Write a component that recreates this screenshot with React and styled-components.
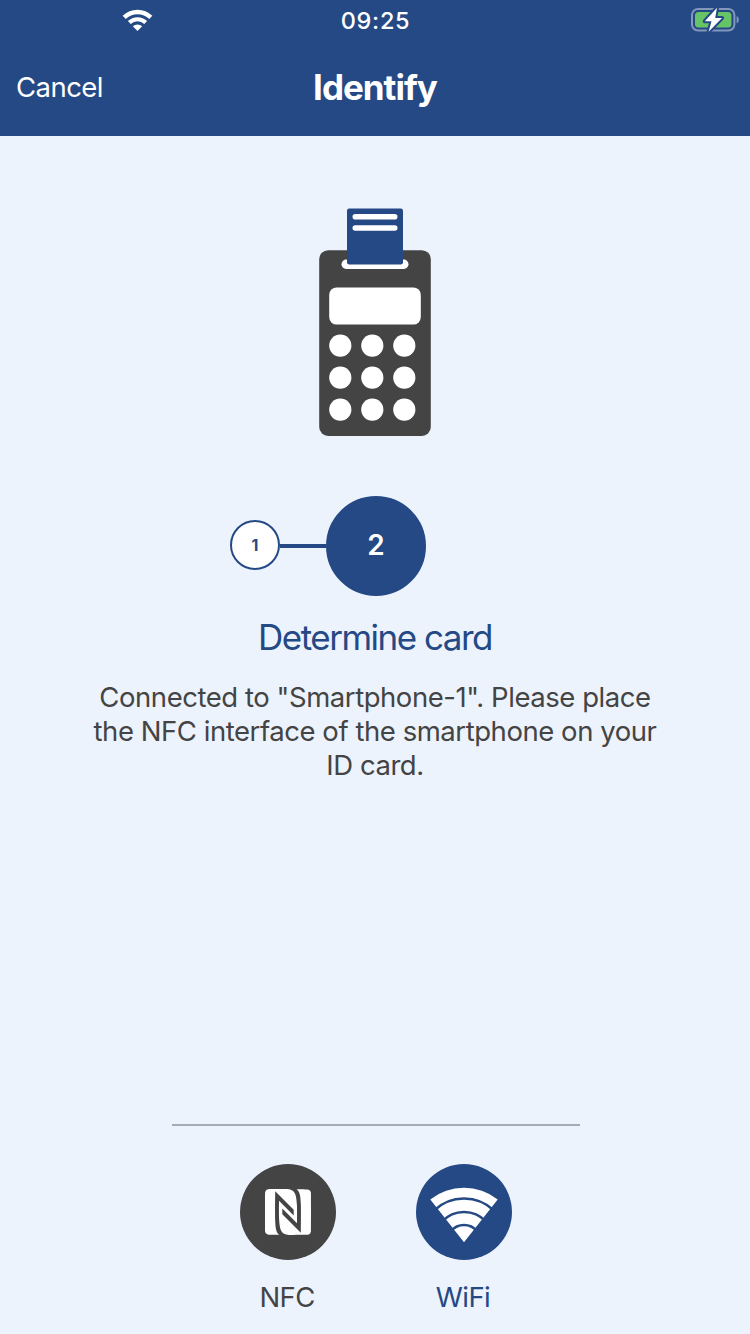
import React from 'react';
import styled, { createGlobalStyle } from 'styled-components';
import { SiNfc } from 'react-icons/si';

const BLUE = '#254985';
const DARK = '#444444';
const PAGE = '#ecf3fd';

const GlobalStyle = createGlobalStyle`
  *, *::before, *::after { box-sizing: border-box; }
  body { margin: 0; background: ${PAGE}; }
`;

const Screen = styled.div`
  display: flex;
  flex-direction: column;
  width: 750px;
  height: 1334px;
  overflow: hidden;
  background: ${PAGE};
  color: ${DARK};
  font-family: Inter, 'Liberation Sans', sans-serif;
`;

const StatusBar = styled.div`
  display: grid;
  grid-template-columns: 1fr auto 1fr;
  align-items: center;
  height: 40px;
  background: ${BLUE};
  color: #fff;
`;

const Signal = styled.div`
  padding-left: 122px;
  line-height: 0;
`;

const Clock = styled.time`
  padding: 2px 0 0 1px;
  font-size: 23.5px;
  font-weight: 500;
  line-height: 38px;
  letter-spacing: 0.7px;
`;

const BatterySlot = styled.div`
  justify-self: end;
  padding-right: 10px;
  line-height: 0;
`;

const NavBar = styled.header`
  display: grid;
  grid-template-columns: 1fr auto 1fr;
  align-items: center;
  height: 96px;
  padding: 0 16px 2px;
  background: ${BLUE};
  color: #fff;
`;

const NavButton = styled.button`
  justify-self: start;
  padding: 0;
  border: 0;
  background: none;
  color: inherit;
  font: 400 27.5px/40px Inter, sans-serif;
  letter-spacing: -0.55px;
`;

const NavTitle = styled.h1`
  margin: 0;
  font-size: 35px;
  font-weight: 700;
  line-height: 44px;
  letter-spacing: -1px;
`;

const Content = styled.main`
  display: flex;
  flex: 1;
  flex-direction: column;
  align-items: center;
  padding-top: 72px;
`;

const Steps = styled.div`
  display: flex;
  align-items: center;
  align-self: flex-start;
  height: 100px;
  margin: 60px 0 0 230px;
`;

const Step = styled.div`
  display: flex;
  align-items: center;
  justify-content: center;
  width: ${(p) => (p.$active ? 100 : 50)}px;
  height: ${(p) => (p.$active ? 100 : 50)}px;
  padding-bottom: ${(p) => (p.$active ? 2 : 0)}px;
  margin-top: ${(p) => (p.$active ? 0 : -2)}px;
  border: 2px solid ${BLUE};
  border-radius: 50%;
  background: ${(p) => (p.$active ? BLUE : '#fff')};
  color: ${(p) => (p.$active ? '#fff' : BLUE)};
  font-size: ${(p) => (p.$active ? 28 : 16)}px;
  font-weight: ${(p) => (p.$active ? 600 : 700)};
`;

const StepLine = styled.div`
  width: 46px;
  height: 4px;
  background: ${BLUE};
`;

const Heading = styled.h2`
  margin: 19px 0 0;
  color: ${BLUE};
  font-size: 35px;
  font-weight: 400;
  line-height: 44px;
  letter-spacing: -1.5px;
`;

const Message = styled.p`
  width: 590px;
  margin: 21px 0 0;
  font-size: 27.5px;
  line-height: 34px;
  letter-spacing: -0.45px;
  text-align: center;
`;

const Footer = styled.footer`
  display: flex;
  flex-direction: column;
  align-items: center;
  height: 210px;
`;

const Divider = styled.hr`
  width: 408px;
  height: 2px;
  margin: 0 0 38px 2px;
  border: 0;
  background: #a5abb9;
`;

const Methods = styled.div`
  display: flex;
  gap: 80px;
  margin-left: 2px;
`;

const Method = styled.div`
  display: flex;
  flex-direction: column;
  align-items: center;
  width: 96px;
  color: ${(p) => p.$color};
`;

const MethodBadge = styled.div`
  display: flex;
  align-items: center;
  justify-content: center;
  width: 96px;
  height: 96px;
  border-radius: 50%;
  background: currentColor;
`;

const MethodLabel = styled.span`
  margin: 17px 2px 0 0;
  font-size: 27.5px;
  line-height: 40px;
  letter-spacing: -0.6px;
`;

const SignalIcon = () => (
  <svg width="31" height="24" viewBox="0 0 31 24" fill="none" stroke="#fff">
    <path d="M2.2 9.4A19 19 0 0 1 28.8 9.4" strokeWidth="4.4" />
    <path d="M7.3 14.5A12 12 0 0 1 23.7 14.5" strokeWidth="4.2" />
    <path d="M15.5 23L10.8 18.2A7 7 0 0 1 20.2 18.2Z" fill="#fff" stroke="none" />
  </svg>
);

const BatteryIcon = () => (
  <svg width="50" height="26" viewBox="0 0 50 26">
    <rect x="2" y="2" width="42.4" height="21.5" rx="6" fill="none" stroke="#8297bb" strokeWidth="2" />
    <path d="M46.6 9v7.5c3-1.6 3-5.9 0-7.5z" fill="#8297bb" />
    <rect x="5" y="5" width="36.4" height="15.5" rx="3.5" fill="#66c466" />
    <path d="M27 0.8L14.8 14.2h6.7L18.6 24.8 32 11h-6.8z" fill="#fff" stroke={BLUE} strokeWidth="4" strokeLinejoin="round" paintOrder="stroke" />
  </svg>
);

const ReaderIcon = () => (
  <svg width="112" height="228" viewBox="319 208 112 228">
    <rect x="319.2" y="250.2" width="111.6" height="185.8" rx="9" fill={DARK} />
    <rect x="341.5" y="259.5" width="67" height="9.5" rx="4.7" fill="#fff" />
    <rect x="347" y="208.5" width="56" height="56" rx="2.2" fill={BLUE} />
    <rect x="352.5" y="214" width="45" height="5.6" rx="2.8" fill="#fff" />
    <rect x="352.5" y="225.2" width="45" height="5.6" rx="2.8" fill="#fff" />
    <rect x="329.2" y="287.4" width="91.6" height="37.2" rx="7.5" fill="#fff" />
    {[345.6, 377.6, 409.6].map((cy) =>
      [340.3, 372.3, 404.3].map((cx) => <circle key={`${cx}-${cy}`} cx={cx} cy={cy} r="11.1" fill="#fff" />)
    )}
  </svg>
);

const WifiIcon = () => (
  <svg width="96" height="96" viewBox="0 0 96 96">
    <path d="M48 78.3L14.3 35.4A54.6 54.6 0 0 1 81.7 35.4Z" fill="#fff" />
    <g fill="none" stroke={BLUE} strokeWidth="2.5">
      <path d="M18 46.5A43.3 43.3 0 0 1 78 46.5" />
      <path d="M26 57.5A30 30 0 0 1 70 57.5" />
      <path d="M35 67A17 17 0 0 1 61 67" />
    </g>
  </svg>
);

export default function App() {
  return (
    <Screen>
      <GlobalStyle />
      <StatusBar>
        <Signal><SignalIcon /></Signal>
        <Clock>09:25</Clock>
        <BatterySlot><BatteryIcon /></BatterySlot>
      </StatusBar>
      <NavBar>
        <NavButton>Cancel</NavButton>
        <NavTitle>Identify</NavTitle>
      </NavBar>
      <Content>
        <ReaderIcon />
        <Steps>
          <Step>1</Step>
          <StepLine />
          <Step $active>2</Step>
        </Steps>
        <Heading>Determine card</Heading>
        <Message>Connected to "Smartphone-1". Please place the NFC interface of the smartphone on your ID card.</Message>
      </Content>
      <Footer>
        <Divider />
        <Methods>
          <Method $color={DARK}>
            <MethodBadge><SiNfc size={46} color="#fff" /></MethodBadge>
            <MethodLabel>NFC</MethodLabel>
          </Method>
          <Method $color={BLUE}>
            <MethodBadge><WifiIcon /></MethodBadge>
            <MethodLabel>WiFi</MethodLabel>
          </Method>
        </Methods>
      </Footer>
    </Screen>
  );
}
